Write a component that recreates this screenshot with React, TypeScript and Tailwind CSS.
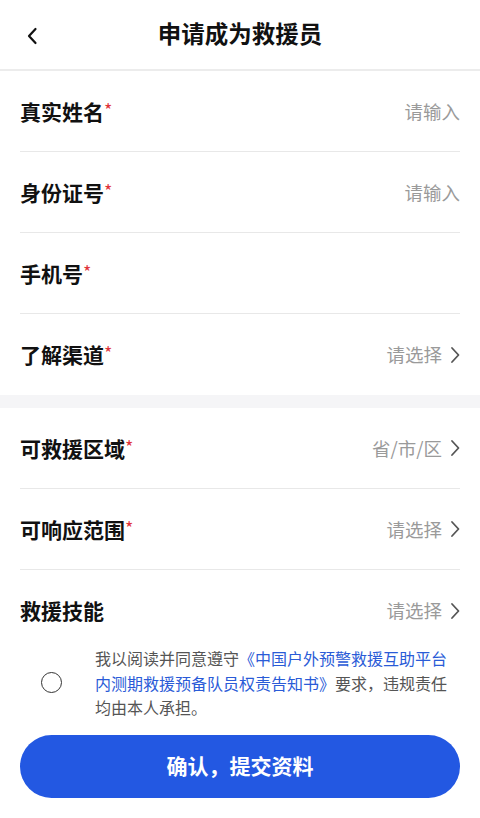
import React from "react";

const font = { fontFamily: '"Noto Sans CJK SC", "Noto Sans", sans-serif' };

function Chevron() {
  return (
    <svg width="10" height="18" viewBox="0 0 10 18" className="ml-[8px]" fill="none">
      <path d="M2 2l6.5 7L2 16" stroke="#555" strokeWidth="1.8" strokeLinecap="round" strokeLinejoin="round" />
    </svg>
  );
}

function Row({ label, required, value, arrow, border = true }: { label: string; required?: boolean; value?: string; arrow?: boolean; border?: boolean }) {
  return (
    <div className={`mx-[20px] h-[81px] flex items-center justify-between ${border ? "border-b border-[#e8e8e8]" : ""}`}>
      <div className="text-[21px] font-bold text-[#111] leading-none flex items-start">
        {label}
        {required && <span className="text-[#e0343a] text-[18px] font-normal -mt-[1px]">*</span>}
      </div>
      {value && (
        <div className="flex items-center text-[18.5px] text-[#9a9a9a] leading-none">
          {value}
          {arrow && <Chevron />}
        </div>
      )}
    </div>
  );
}

export default function App() {
  return (
    <div className="w-[480px] h-[818px] bg-white overflow-hidden" style={font}>
      <div className="relative h-[71px] flex items-center justify-center border-b-2 border-[#ececec]">
        <svg className="absolute left-[26px] top-[27px]" width="12" height="18" viewBox="0 0 12 18" fill="none">
          <path d="M9.5 2L3 9l6.5 7" stroke="#111" strokeWidth="2.2" strokeLinecap="round" strokeLinejoin="round" />
        </svg>
        <div className="text-[23.5px] font-bold text-[#111] leading-none -mt-[1px]">申请成为救援员</div>
      </div>
      <Row label="真实姓名" required value="请输入" />
      <Row label="身份证号" required value="请输入" />
      <Row label="手机号" required />
      <Row label="了解渠道" required value="请选择" arrow border={false} />
      <div className="h-[13px] bg-[#f5f5f7]" />
      <Row label="可救援区域" required value="省/市/区" arrow />
      <Row label="可响应范围" required value="请选择" arrow />
      <Row label="救援技能" value="请选择" arrow border={false} />
      <div className="flex items-center -mt-[5px]">
        <div className="w-[95px] flex justify-center shrink-0">
          <div className="w-[21px] h-[21px] rounded-full border-[1.5px] border-[#333] ml-[8px]" />
        </div>
        <div className="w-[356px] text-[16px] leading-[24.5px] text-[#555]">
          我以阅读并同意遵守<span className="text-[#2a5bd7]">《中国户外预警救援互助平台内测期救援预备队员权责告知书》</span>要求，违规责任均由本人承担。
        </div>
      </div>
      <div className="px-[20px] mt-[15px]">
        <div className="h-[63px] rounded-full bg-[#2358e2] flex items-center justify-center text-white text-[21px] font-bold">
          确认，提交资料
        </div>
      </div>
    </div>
  );
}
